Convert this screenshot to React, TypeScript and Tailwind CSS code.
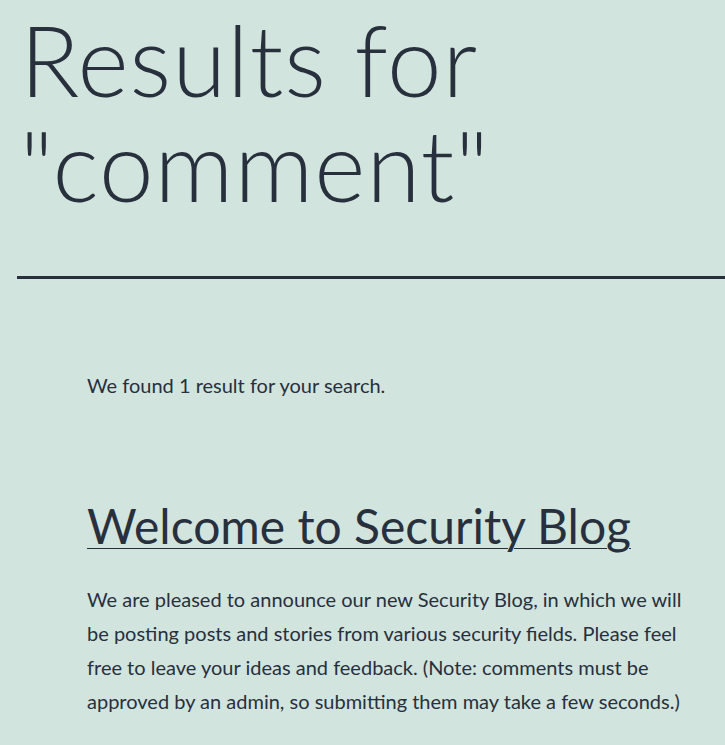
export default function App() {
  return (
    <div className="min-h-[745px] w-full overflow-hidden bg-[#d1e4dd] font-['Lato',sans-serif] text-[#28303d]">
      <header className="ml-[17px] border-b-[3px] border-[#28303d] pb-[59px]">
        <h1 className="pl-[3px] pt-[7px] text-[98px] font-light leading-[105px] tracking-[1px]">
          Results for
          <br />
          "comment"
        </h1>
      </header>

      <main className="pl-[87px] pr-[30px]">
        <p className="mt-[89px] text-[20px] leading-[1.7]">We found 1 result for your search.</p>

        <article className="mt-[93px]">
          <h2 className="text-[48px] leading-[1.3]">
            <a href="#" className="underline decoration-1 underline-offset-[4px]">
              Welcome to Security Blog
            </a>
          </h2>
          <p className="mt-[25px] text-[20px] leading-[1.7]">
            We are pleased to announce our new Security Blog, in which we will be posting posts and
            stories from various security fields. Please feel free to leave your ideas and feedback.
            (Note: comments must be approved by an admin, so submitting them may take a few seconds.)
          </p>
        </article>
      </main>
    </div>
  );
}
